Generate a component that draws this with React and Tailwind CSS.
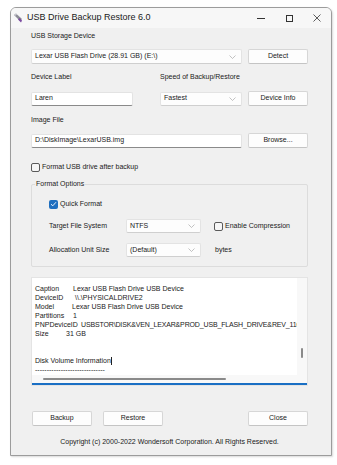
import React from "react";

const font = { fontFamily: '"Liberation Sans", Arial, sans-serif' };

function Chevron() {
  return (
    <svg width="7" height="4" viewBox="0 0 7 4" className="shrink-0">
      <path d="M0.5 0.5 L3.5 3.5 L6.5 0.5" fill="none" stroke="#a8a8a8" strokeWidth="0.7" />
    </svg>
  );
}

function Combo({ text, w, h = 14 }) {
  return (
    <div
      className="flex items-center justify-between pl-[3px] pr-[5px] bg-[#fdfdfd] border border-[#e3e3e3] border-b-[#cfcfcf] rounded-[2px] text-[7px] text-[#1a1a1a]"
      style={{ width: w, height: h }}
    >
      <span>{text}</span>
      <Chevron />
    </div>
  );
}

function Input({ text, w }) {
  return (
    <div
      className="flex items-center pl-[3px] h-[14px] bg-white border border-[#e3e3e3] border-b-[#8a8a8a] rounded-[2px] text-[7px] text-[#1a1a1a]"
      style={{ width: w }}
    >
      {text}
    </div>
  );
}

function Btn({ children }) {
  return (
    <div className="w-[60px] h-[15px] flex items-center justify-center bg-[#fdfdfd] border border-[#d6d6d6] border-b-[#c4c4c4] rounded-[2px] text-[7px] text-[#1a1a1a]">
      {children}
    </div>
  );
}

function Check({ checked }) {
  return checked ? (
    <div className="w-[9px] h-[9px] rounded-[2px] bg-[#1f6fbf] flex items-center justify-center shrink-0">
      <svg width="7" height="6" viewBox="0 0 7 6">
        <path d="M1 3.2 L2.8 4.8 L6 1.2" fill="none" stroke="#fff" strokeWidth="0.9" />
      </svg>
    </div>
  ) : (
    <div className="w-[9px] h-[9px] rounded-[2px] border border-[#5a5a5a] bg-[#f6f6f6] shrink-0" />
  );
}

const lines = [
  ["Caption", 38, "Lexar USB Flash Drive USB Device"],
  ["DeviceID", 40, "\\\\.\\PHYSICALDRIVE2"],
  ["Model", 37, "Lexar USB Flash Drive USB Device"],
  ["Partitions", 38, "1"],
  ["PNPDeviceID", 46, "USBSTOR\\DISK&VEN_LEXAR&PROD_USB_FLASH_DRIVE&REV_1100"],
  ["Size", 31, "31 GB"],
];

export default function App() {
  return (
    <div className="w-[337px] h-[465px] bg-white pt-[7px] pl-[10px]" style={font}>
      <div className="w-[322px] h-[449px] border border-[#9c9c9c] rounded-t-[6px] bg-[#f0f0f0] flex flex-col overflow-hidden shadow-[1px_1px_2px_rgba(0,0,0,0.15)]">
        {/* title bar */}
        <div className="h-[20px] bg-[#f7f7f7] flex items-center shrink-0">
          <svg width="11" height="10" viewBox="0 0 11 10" className="ml-[2px] mr-[3px]">
            <path d="M1 2 L3 0.5 L9 6 L7 8 Z" fill="#8c8c96" />
            <path d="M6.5 5 L9 7.5 L8 9.5 L5 6.5 Z" fill="#7a4aa0" />
            <path d="M1 2 L3 0.5 L4 1.5 L2 3 Z" fill="#c8c8d0" />
          </svg>
          <span className="text-[9px] text-[#1a1a1a]">USB Drive Backup Restore 6.0</span>
          <div className="ml-auto flex items-center">
            <div className="w-[28px] flex justify-center">
              <div className="w-[8px] h-[1px] bg-[#333]" />
            </div>
            <div className="w-[28px] flex justify-center">
              <div className="w-[7px] h-[7px] border border-[#333]" />
            </div>
            <div className="w-[28px] flex justify-center">
              <svg width="8" height="8" viewBox="0 0 8 8">
                <path d="M0.5 0.5 L7.5 7.5 M7.5 0.5 L0.5 7.5" stroke="#333" strokeWidth="0.8" />
              </svg>
            </div>
          </div>
        </div>

        {/* body */}
        <div className="pl-[20px] pr-[23px] flex flex-col text-[7px] text-[#1a1a1a]">
          <div className="h-[14px] mt-[1px] flex items-center">USB Storage Device</div>
          <div className="mt-[6px] flex items-center justify-between">
            <Combo text="Lexar USB Flash Drive (28.91 GB) (E:\)" w={211} h={15} />
            <Btn>Detect</Btn>
          </div>

          <div className="h-[14px] mt-[6px] flex items-center">
            <span className="w-[129px]">Device Label</span>
            <span>Speed of Backup/Restore</span>
          </div>
          <div className="mt-[7px] flex items-center">
            <Input text="Laren" w={102} />
            <div className="ml-[27px]">
              <Combo text="Fastest" w={82} />
            </div>
            <div className="ml-auto">
              <Btn>Device Info</Btn>
            </div>
          </div>

          <div className="h-[14px] mt-[7px] flex items-center">Image File</div>
          <div className="mt-[6px] flex items-center justify-between">
            <Input text="D:\DiskImage\LexarUSB.img" w={211} />
            <Btn>Browse...</Btn>
          </div>

          <div className="h-[14px] mt-[12px] flex items-center gap-[2px]">
            <Check />
            <span>Format USB drive after backup</span>
          </div>

          {/* group */}
          <div className="relative mt-[10px] h-[83px] border border-[#dcdcdc] rounded-[2px] flex flex-col pl-[17px]">
            <span className="absolute left-[3px] top-[-6px] bg-[#f0f0f0] px-[1px] leading-[10px]">Format Options</span>
            <div className="h-[10px] mt-[14px] flex items-center gap-[2px]">
              <Check checked />
              <span>Quick Format</span>
            </div>
            <div className="mt-[10px] flex items-center">
              <span className="w-[77px]">Target File System</span>
              <Combo text="NTFS" w={75} />
              <div className="ml-[13px] flex items-center gap-[2px]">
                <Check />
                <span>Enable Compression</span>
              </div>
            </div>
            <div className="mt-[10px] flex items-center">
              <span className="w-[77px]">Allocation Unit Size</span>
              <Combo text="(Default)" w={75} />
              <span className="ml-[14px]">bytes</span>
            </div>
          </div>

          {/* text area */}
          <div className="mt-[10px] h-[109px] bg-[#f8f8f8] border border-[#e4e4e4] flex flex-col">
            <div className="flex h-[97px]">
              <div className="w-[265px] bg-white overflow-hidden pt-[6px] pl-[3px] leading-[9px] whitespace-nowrap">
                {lines.map(([k, w, v]) => (
                  <div key={k} className={k === "PNPDeviceID" ? "flex tracking-[-0.15px]" : "flex"}>
                    <span className="shrink-0 tracking-normal" style={{ width: w }}>{k}</span>
                    <span>{v}</span>
                  </div>
                ))}
                <div className="h-[9px]" />
                <div className="h-[9px]" />
                <div className="flex items-center">
                  <span>Disk Volume Information</span>
                  <span className="w-[1px] h-[8px] bg-[#222]" />
                </div>
                <div>------------------------------</div>
              </div>
              <div className="flex-1 flex justify-center pt-[70px]">
                <div className="w-[1.5px] h-[10px] bg-[#8a8a8a] rounded-full" />
              </div>
            </div>
            <div className="flex-1 flex items-center pl-[11px]">
              <div className="w-[183px] h-[1.5px] bg-[#8a8a8a] rounded-full" />
            </div>
            <div className="h-[2px] bg-[#1a6fc4]" />
          </div>

          <div className="mt-[25px] flex items-center">
            <div className="ml-[1px]"><Btn>Backup</Btn></div>
            <div className="ml-[11px]"><Btn>Restore</Btn></div>
            <div className="ml-auto"><Btn>Close</Btn></div>
          </div>

          <div className="mt-[11px] text-center text-[7px]">
            Copyright (c) 2000-2022 Wondersoft Corporation. All Rights Reserved.
          </div>
        </div>
      </div>
    </div>
  );
}
